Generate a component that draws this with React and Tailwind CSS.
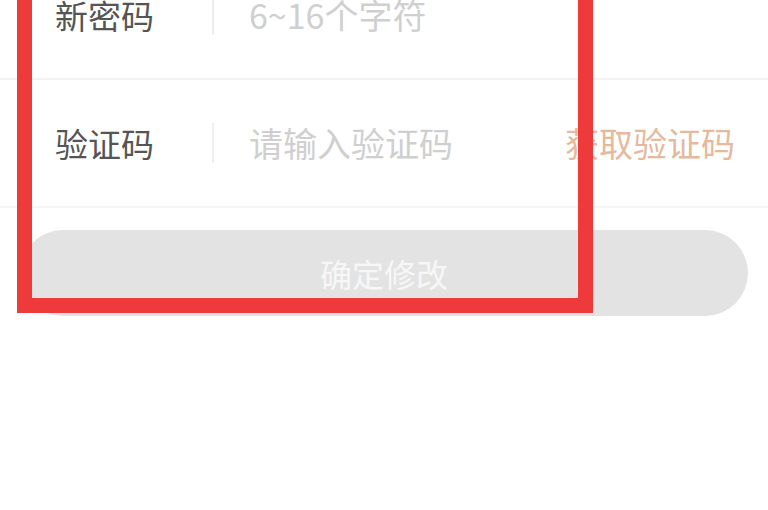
export default function App() {
  const font = { fontFamily: '"Noto Sans CJK SC", "Noto Sans", sans-serif' };
  return (
    <div className="relative w-[768px] h-[510px] overflow-hidden bg-white" style={font}>
      <div className="mt-[-48px]">
        <div className="flex items-center h-[128px] border-b-2 border-[#f3f3f3]">
          <div className="w-[212px] shrink-0 pl-[55px] text-[33px] leading-none text-[#555555]">新密码</div>
          <div className="w-[2px] h-[40px] bg-[#eeeeee]" />
          <div className="ml-[35px] text-[34px] leading-none text-[#cfcfcf]">6~16个字符</div>
        </div>
        <div className="flex items-center h-[128px] border-b-2 border-[#f5f5f5]">
          <div className="w-[212px] shrink-0 pl-[55px] text-[33px] leading-none text-[#555555]">验证码</div>
          <div className="w-[2px] h-[40px] bg-[#f0f0f0]" />
          <div className="ml-[35px] flex-1 text-[34px] leading-none text-[#cfcfcf]">请输入验证码</div>
          <div className="pr-[33px] text-[34px] leading-none text-[#e6b99d]">获取验证码</div>
        </div>
        <div className="mx-[20px] mt-[22px] h-[86px] rounded-full bg-[#e3e3e3] flex items-center justify-center">
          <span className="text-[32px] leading-none text-[#f7f7f7]">确定修改</span>
        </div>
      </div>
      <div className="absolute left-[17px] top-[-40px] w-[576px] h-[353px] border-[15px] border-t-0 border-[#ee3a3b]" />
    </div>
  );
}
